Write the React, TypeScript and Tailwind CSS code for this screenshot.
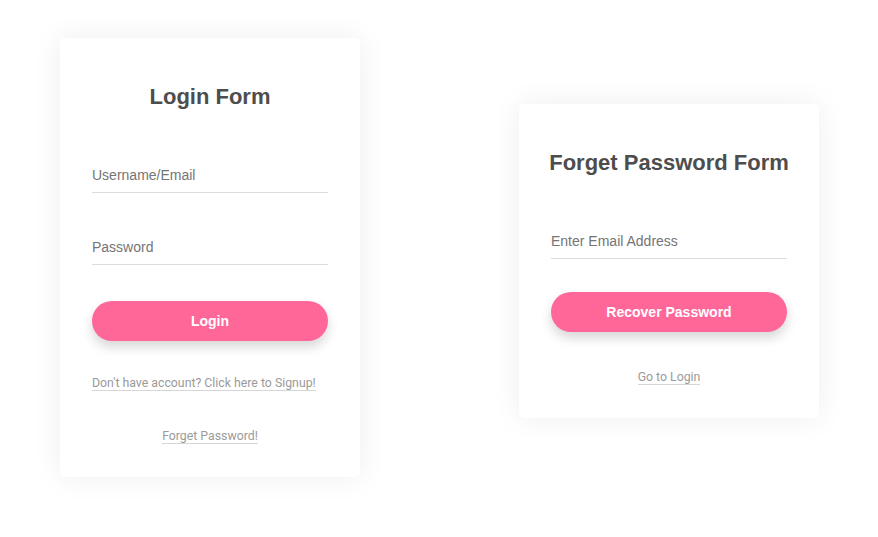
import React from "react";

function Field({ placeholder, type = "text", className = "" }: { placeholder: string; type?: string; className?: string }) {
  return (
    <input
      type={type}
      placeholder={placeholder}
      className={`block w-full h-[36px] border-b border-[#dcdcdc] bg-transparent text-[14px] text-[#555] outline-none placeholder:text-[#757575] font-['Liberation_Sans',Arial,sans-serif] ${className}`}
    />
  );
}

function PinkButton({ children, className = "" }: { children: React.ReactNode; className?: string }) {
  return (
    <button className={`block w-full h-[40px] rounded-full bg-[#ff6799] text-white font-bold text-[14px] font-['Liberation_Sans',Arial,sans-serif] shadow-[0_6px_12px_rgba(0,0,0,0.16)] ${className}`}>
      {children}
    </button>
  );
}

function LinkText({ children, className = "", align = "center" }: { children: React.ReactNode; className?: string; align?: "center" | "start" }) {
  return (
    <div className={`flex ${align === "center" ? "justify-center" : "justify-start"} ${className}`}>
      <a className="inline-block text-[12.3px] leading-[14px] text-[#9a9a9a] border-b border-[#d6d6d6] font-['Roboto',Arial,sans-serif] cursor-pointer">
        {children}
      </a>
    </div>
  );
}

export default function App() {
  return (
    <div className="w-[878px] h-[537px] bg-white flex items-start pl-[60px] gap-[159px] font-['Liberation_Sans',Arial,sans-serif] overflow-hidden">
      <div className="mt-[38px] w-[300px] bg-white rounded-[5px] shadow-[0_0_30px_rgba(0,0,0,0.07)] px-[32px] pt-[46px] pb-[33px]">
        <h1 className="text-center whitespace-nowrap text-[22px] leading-[25px] font-bold text-[#4d4d4d]">Login Form</h1>
        <Field placeholder="Username/Email" className="mt-[48px]" />
        <Field placeholder="Password" type="password" className="mt-[36px]" />
        <PinkButton className="mt-[36px]">Login</PinkButton>
        <LinkText align="start" className="mt-[35px]">Don't have account? Click here to Signup!</LinkText>
        <LinkText className="mt-[38px]">Forget Password!</LinkText>
      </div>

      <div className="mt-[104px] w-[300px] bg-white rounded-[5px] shadow-[0_0_30px_rgba(0,0,0,0.07)] px-[32px] pt-[46px] pb-[33px]">
        <h1 className="-mx-[2px] text-center whitespace-nowrap text-[22px] leading-[25px] font-bold text-[#4d4d4d]">Forget Password Form</h1>
        <Field placeholder="Enter Email Address" className="mt-[48px]" />
        <PinkButton className="mt-[33px]">Recover Password</PinkButton>
        <LinkText className="mt-[38px]">Go to Login</LinkText>
      </div>
    </div>
  );
}
